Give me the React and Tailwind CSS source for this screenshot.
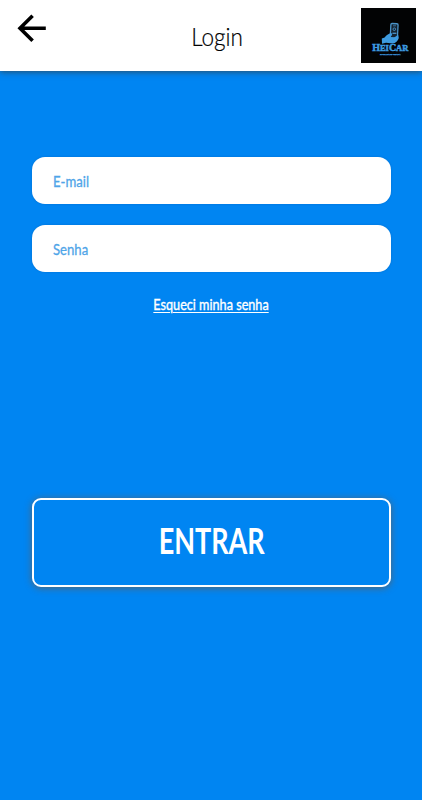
import { useState } from 'react'

function LogoHeiCar() {
  return (
    <svg viewBox="0 0 55 55" className="h-[55px] w-[55px]" role="img" aria-label="HeiCar">
      <rect width="55" height="55" fill="#020304" />
      <rect x="29.6" y="15.6" width="7.2" height="14.5" rx="1.2" fill="#14222f" stroke="#4a93c8" strokeWidth="1.3" transform="rotate(3 33 22)" />
      <path d="M32 17.8 h3" stroke="#4a93c8" strokeWidth="0.7" />
      <circle cx="33.3" cy="21.2" r="1.3" fill="none" stroke="#4a93c8" strokeWidth="0.9" />
      <path d="M31.4 25.3 h4" stroke="#4a93c8" strokeWidth="1.3" />
      <path
        d="M20.8 30.6 L23.6 29.4 C25.4 27 28 25.4 30.6 25 L31.2 27 L29.2 29 L33 29.6 L37.2 27 L37.8 30 C37 33 34.6 35.2 31.6 35.6 L25 34.8 L21 35.8 Z"
        fill="#3d9be0"
      />
      <g fill="#3d9be0" stroke="#3d9be0" fontFamily="'Liberation Serif', serif" fontWeight="700">
        <text x="11.2" y="43.3" fontSize="9.4" textLength="36.2" lengthAdjust="spacingAndGlyphs" strokeWidth="0.5">
          H<tspan fontSize="8">EI</tspan>C<tspan fontSize="8">AR</tspan>
        </text>
        <text x="19" y="47.4" fontSize="2.6" textLength="20.5" lengthAdjust="spacingAndGlyphs" strokeWidth="0.25">
          MOBILIDADE URBANA
        </text>
      </g>
    </svg>
  )
}

function Campo({ label, type, value, onChange }) {
  return (
    <label className="relative block h-[47px] rounded-[13px] bg-white shadow-[0_0_2px_rgba(0,60,120,0.3)]">
      <input
        type={type}
        aria-label={label}
        value={value}
        onChange={onChange}
        className="h-full w-full rounded-[13px] bg-transparent px-[21px] outline-none"
      />
      {!value && (
        <span className="pointer-events-none absolute top-[13.5px] left-[21.5px] origin-left scale-x-[0.82] text-[16px] leading-[22px] whitespace-nowrap text-[#4fa5e8] [-webkit-text-stroke:0.3px_#4fa5e8]">
          {label}
        </span>
      )}
    </label>
  )
}

export default function App() {
  const [email, setEmail] = useState('')
  const [senha, setSenha] = useState('')

  return (
    <div className="flex h-[800px] w-full flex-col overflow-hidden bg-[#0085f2] font-['Lato',sans-serif]">
      <header className="grid h-[71px] shrink-0 grid-cols-[1fr_auto_1fr] items-start bg-white pr-1.5 pl-[17px] shadow-[0_1px_6px_rgba(50,70,80,0.85)]">
        <button type="button" aria-label="Voltar" className="mt-3.5 w-[30px]">
          <svg viewBox="0 0 30 30" className="h-[30px] w-[30px]" fill="none" stroke="#000" strokeWidth="3.6">
            <path d="M28.8 14.3 H3 M15.6 1.8 L3 14.3 L15.6 26.8" />
          </svg>
        </button>
        <h1 className="mt-[20px] w-[64px] scale-x-[0.9] text-center text-[25px] leading-[32px] font-light text-black [-webkit-text-stroke:0.2px_#000]">
          Login
        </h1>
        <div className="mt-2 justify-self-end">
          <LogoHeiCar />
        </div>
      </header>

      <form className="flex flex-col px-[31.5px] pt-[85.5px]" onSubmit={(e) => e.preventDefault()}>
        <div className="flex flex-col gap-[21px]">
          <Campo label="E-mail" type="email" value={email} onChange={(e) => setEmail(e.target.value)} />
          <Campo label="Senha" type="password" value={senha} onChange={(e) => setSenha(e.target.value)} />
        </div>
        <button
          type="button"
          className="mt-[21px] h-[22px] scale-x-[0.79] self-center text-[16px] leading-[22px] whitespace-nowrap text-white underline underline-offset-2 [-webkit-text-stroke:0.4px_#fff]"
        >
          Esqueci minha senha
        </button>
        <button
          type="submit"
          className="mt-[183px] flex h-[89px] items-center justify-center rounded-[9px] border-2 border-white pb-1 pl-0.5 text-white shadow-[0_1px_7px_rgba(95,95,95,0.9)]"
        >
          <span className="scale-x-[0.75] text-[36px] leading-[40px] font-bold">ENTRAR</span>
        </button>
      </form>
    </div>
  )
}
